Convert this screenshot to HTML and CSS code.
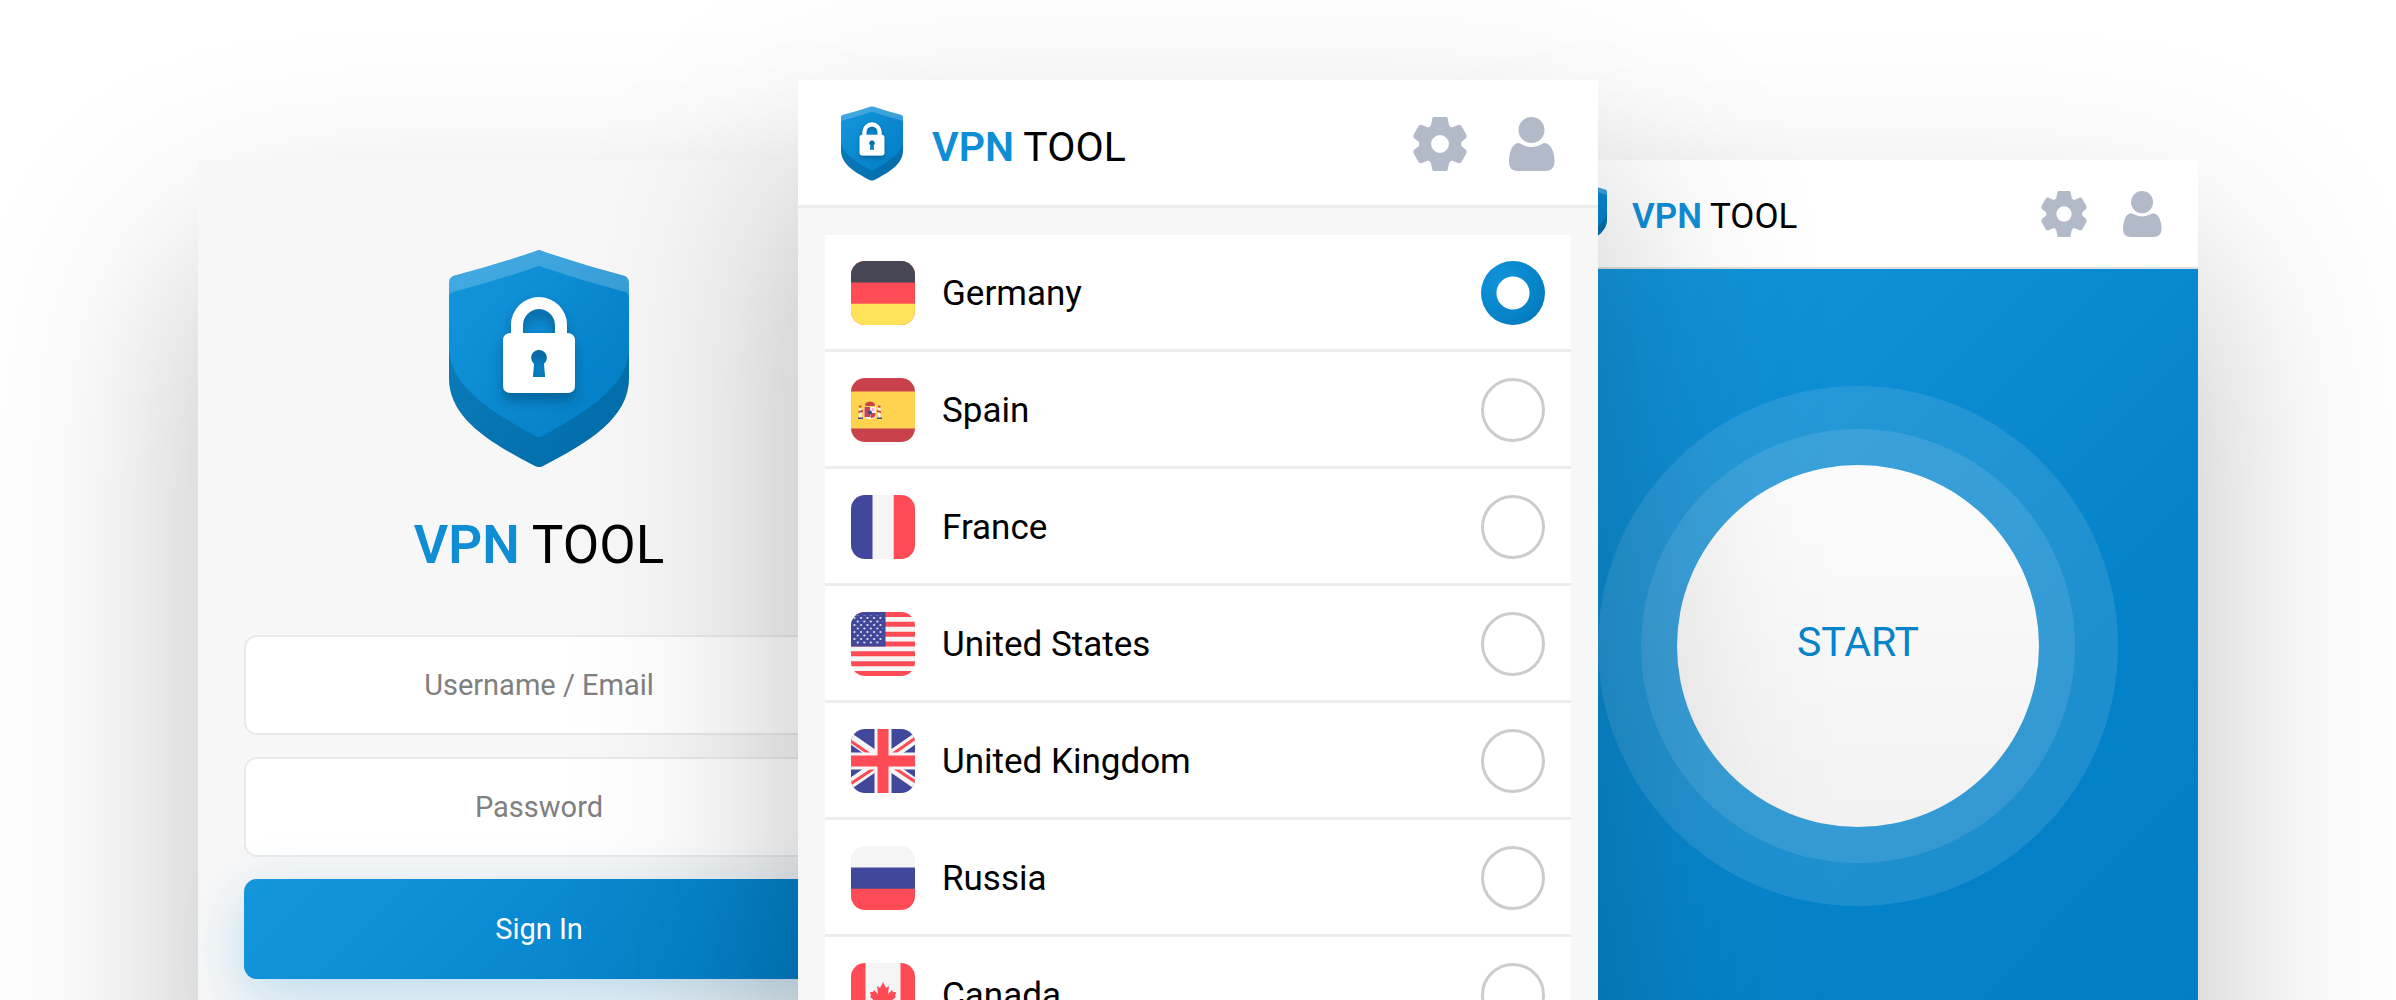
FILE: index.html
```html
<!DOCTYPE html>
<html lang="en">
<head>
  <meta charset="UTF-8" />
  <meta name="viewport" content="width=device-width, initial-scale=1.0"/>
  <title>VPN Tool</title>
  <link rel="stylesheet" href="styles.css">
</head>
<body>

  <!-- Shared icons -->
  <svg class="sprite" aria-hidden="true">
    <defs>
      <linearGradient id="shield-fill" x1="0" y1="0" x2="1" y2="1">
        <stop offset="0" stop-color="#1496dd"/>
        <stop offset="1" stop-color="#007cc3"/>
      </linearGradient>
      <filter id="lock-shadow" x="-50%" y="-50%" width="200%" height="200%">
        <feDropShadow dx="0" dy="8" stdDeviation="6" flood-color="#00324f" flood-opacity="0.4"/>
      </filter>
      <clipPath id="shield-clip">
        <path d="M87 1Q90 -1 93 1Q134 15 176 26Q180 28 180 33V128C180 168 140 192 94 216Q90 218 86 216C40 192 0 168 0 128V33Q0 28 4 26Q46 15 87 1Z"/>
      </clipPath>
      <clipPath id="flag-clip"><rect width="64" height="64" rx="14"/></clipPath>
    </defs>
    <symbol id="shield" viewBox="0 0 180 217">
      <g clip-path="url(#shield-clip)">
        <rect width="180" height="217" fill="url(#shield-fill)"/>
        <path d="M0 0H180V48Q180 43 176 42Q134 31 93 17Q90 15 87 17Q46 31 4 42Q0 43 0 48Z" fill="#fff" opacity="0.2"/>
        <path d="M0 100C2 138 44 162 86 186Q90 188 94 186C136 162 178 138 180 100V217H0Z" fill="#003a5c" opacity="0.25"/>
      </g>
      <path filter="url(#lock-shadow)" fill="#fff" fill-rule="evenodd" d="M62 83V75A28 28 0 0 1 118 75V83Q126 83 126 91V135Q126 143 118 143H62Q54 143 54 135V91Q54 83 62 83ZM74 83H106V75A16 16 0 0 0 74 75ZM84 127H96V125L95 114A8 8 0 1 0 85 114L84 125Z"/>
    </symbol>
    <symbol id="gear" viewBox="0 0 54 54">
      <path fill-rule="evenodd" d="M21 0H33Q35 0 35 3L36 8Q37 10 39 10.500L45 8Q47 7 48.500 9L53.500 18Q54 20 53 21L48.500 25Q48 27 48.500 29L53 33Q54 34 53.500 36L48.500 45Q47 47 45 46L39 43.500Q37 44 36 46L35 51Q35 54 33 54H21Q19 54 19 51L18 46Q17 44 15 43.500L9 46Q7 47 5.500 45L0.500 36Q0 34 1 33L6 29Q6.500 27 6 25L1 21Q0 20 0.500 18L5.500 9Q7 7 9 8L15 10.500Q17 10 18 8L19 3Q19 0 21 0ZM27 18A9 9 0 1 0 27 36A9 9 0 1 0 27 18Z"/>
    </symbol>
    <symbol id="user" viewBox="0 0 46 54">
      <circle cx="22.500" cy="13" r="13"/>
      <path d="M9 26Q11 26 14 28Q22.500 32 31 28Q34 26 36 26C43 27 46 38 45.500 45Q45 54 36 54H9Q0 54 0 45C0 38 2 27 9 26Z"/>
    </symbol>
  </svg>

  <main class="showcase">

    <!-- Login -->
    <section class="panel login">
      <svg class="login-shield"><use href="#shield"/></svg>
      <h1 class="brand brand-large"><b>VPN</b> TOOL</h1>
      <form class="login-form">
        <input type="text" placeholder="Username / Email" aria-label="Username or email" />
        <input type="password" placeholder="Password" aria-label="Password" />
        <button type="button">Sign In</button>
      </form>
    </section>

    <!-- Country list -->
    <section class="panel locations">
      <header class="bar">
        <svg class="bar-shield"><use href="#shield"/></svg>
        <h2 class="brand"><b>VPN</b> TOOL</h2>
        <button class="icon-button" type="button" aria-label="Settings"><svg class="icon-gear"><use href="#gear"/></svg></button>
        <button class="icon-button" type="button" aria-label="Account"><svg class="icon-user"><use href="#user"/></svg></button>
      </header>

      <div class="country-list">
        <label class="country">
          <svg class="flag" viewBox="0 0 64 64"><g clip-path="url(#flag-clip)">
            <rect width="64" height="64" fill="#ff4b55"/>
            <rect width="64" height="21.500" fill="#464655"/>
            <rect y="42.700" width="64" height="22" fill="#ffe15a"/>
          </g></svg>
          <span>Germany</span>
          <input type="radio" name="country" checked />
        </label>

        <label class="country">
          <svg class="flag" viewBox="0 0 64 64"><g clip-path="url(#flag-clip)">
            <rect width="64" height="64" fill="#c8414b"/>
            <rect y="13.500" width="64" height="37" fill="#ffd250"/>
            <path d="M8 30H10.500V40H8ZM27 30H29.500V40H27Z" fill="#f5f5f5"/>
            <path d="M7 39.500H12V41H7ZM26 39.500H31V41H26Z" fill="#41479b"/>
            <path d="M8 27.500H10.500V29.500H8ZM27 27.500H29.500V29.500H27ZM7.500 33L12 32V34L7.500 35ZM30 33L26 32V34L30 35ZM14 27Q14 24 19 23.500Q24 24 24 27L23 28H15Z" fill="#c8414b"/>
            <path d="M13 29H25V37Q25 41 19 41Q13 41 13 37Z" fill="#f5f5f5"/>
            <path d="M13.500 29H19V39H13.500ZM19.500 35H24.500V37Q24 40 19.500 40Z" fill="#c8414b"/>
            <circle cx="19" cy="34.500" r="2" fill="#41479b"/>
            <circle cx="22" cy="31.500" r="1.500" fill="#ffa0d2"/>
          </g></svg>
          <span>Spain</span>
          <input type="radio" name="country" />
        </label>

        <label class="country">
          <svg class="flag" viewBox="0 0 64 64"><g clip-path="url(#flag-clip)">
            <rect width="64" height="64" fill="#f5f5f5"/>
            <rect width="21.500" height="64" fill="#41479b"/>
            <rect x="42.700" width="22" height="64" fill="#ff4b55"/>
          </g></svg>
          <span>France</span>
          <input type="radio" name="country" />
        </label>

        <label class="country">
          <svg class="flag" viewBox="0 0 64 64">
            <defs>
              <pattern id="stars" x="1.500" y="1" width="6.500" height="7" patternUnits="userSpaceOnUse">
                <circle cx="2" cy="5" r="1" fill="#f5f5f5"/>
                <circle cx="5.300" cy="1.500" r="1" fill="#f5f5f5"/>
              </pattern>
            </defs>
            <g clip-path="url(#flag-clip)">
              <rect width="64" height="64" fill="#f5f5f5"/>
              <path d="M0 2.500H64M0 12.300H64M0 22.200H64M0 32H64M0 41.800H64M0 51.700H64M0 61.500H64" stroke="#ff4b55" stroke-width="4.900"/>
              <rect width="34.500" height="34.500" fill="#41479b"/>
              <rect x="2" y="3" width="30" height="30" fill="url(#stars)"/>
            </g>
          </svg>
          <span>United States</span>
          <input type="radio" name="country" />
        </label>

        <label class="country">
          <svg class="flag" viewBox="0 0 64 64"><g clip-path="url(#flag-clip)">
            <rect width="64" height="64" fill="#41479b"/>
            <path d="M-4 7L68 57M68 7L-4 57" stroke="#f5f5f5" stroke-width="10"/>
            <path d="M-2 11L20 26M-2 56L28 36M66 8L36 29M66 54L42 38" stroke="#ff4b55" stroke-width="3"/>
            <path d="M32 0V64M0 32H64" stroke="#f5f5f5" stroke-width="17"/>
            <path d="M32 0V64M0 32H64" stroke="#ff4b55" stroke-width="11"/>
          </g></svg>
          <span>United Kingdom</span>
          <input type="radio" name="country" />
        </label>

        <label class="country">
          <svg class="flag" viewBox="0 0 64 64"><g clip-path="url(#flag-clip)">
            <rect width="64" height="64" fill="#f5f5f5"/>
            <rect y="21.500" width="64" height="22" fill="#41479b"/>
            <rect y="42.700" width="64" height="22" fill="#ff4b55"/>
          </g></svg>
          <span>Russia</span>
          <input type="radio" name="country" />
        </label>

        <label class="country">
          <svg class="flag" viewBox="0 0 64 64"><g clip-path="url(#flag-clip)">
            <rect width="64" height="64" fill="#f5f5f5"/>
            <path d="M0 0H14.500V64H0ZM49.500 0H64V64H49.500Z" fill="#ff4b55"/>
            <path d="M32 19L35 25L38 23L37 31L41 27L42 29L45 29L44 33L45 34L38 40L39 42L33 41V47H31V41L25 42L26 40L19 34L20 33L19 29L22 29L23 27L27 31L26 23L29 25Z" fill="#ff4b55"/>
          </g></svg>
          <span>Canada</span>
          <input type="radio" name="country" />
        </label>
      </div>
    </section>

    <!-- Connect -->
    <section class="panel connect">
      <header class="bar bar-small">
        <svg class="bar-shield"><use href="#shield"/></svg>
        <h2 class="brand"><b>VPN</b> TOOL</h2>
        <button class="icon-button" type="button" aria-label="Settings"><svg class="icon-gear"><use href="#gear"/></svg></button>
        <button class="icon-button" type="button" aria-label="Account"><svg class="icon-user"><use href="#user"/></svg></button>
      </header>
      <div class="connect-body">
        <div class="ring">
          <div class="ring">
            <button class="start" type="button">START</button>
          </div>
        </div>
      </div>
    </section>

  </main>

</body>
</html>
```
FILE: styles.css
```css
* {
  box-sizing: border-box;
}

body {
  margin: 0;
  font-family: Roboto, 'Liberation Sans', sans-serif;
  background-color: #fff;
  color: #000;
}

button,
input {
  font-family: inherit;
}

.sprite {
  position: absolute;
  width: 0;
  height: 0;
}

.showcase {
  display: grid;
  grid-template-columns: minmax(0, 3fr) minmax(0, 4fr) minmax(0, 3fr);
  height: 100vh;
  padding: 80px 198px 0;
  overflow: hidden;
}

.panel {
  min-height: 1070px;
  box-shadow: 0 100px 200px rgba(0, 0, 0, 0.25);
}

/* Brand */
.brand {
  margin: 0;
  font-size: 41px;
  font-weight: 400;
  line-height: 48px;
  white-space: nowrap;
}

.brand b {
  font-weight: 600;
  color: #0f8ed6;
}

.brand-large {
  font-size: 53px;
  line-height: 64px;
}

/* Login */
.login {
  display: flex;
  flex-direction: column;
  align-items: center;
  margin: 80px -80px 0 0;
  padding: 90px 44px 0 46px;
  background-color: #f7f7f7;
}

.login-shield {
  width: 180px;
  height: 217px;
  margin-bottom: 46px;
}

.login-form {
  display: flex;
  flex-direction: column;
  align-self: stretch;
  gap: 22px;
  margin-top: 58px;
}

.login-form input,
.login-form button {
  width: 100%;
  height: 100px;
  padding: 0 24px;
  border: 2px solid #eaeaea;
  border-radius: 13px;
  font-size: 29px;
  text-align: center;
  background-color: #fff;
}

.login-form input::placeholder {
  color: #808080;
  opacity: 1;
}

.login-form button {
  border: 0;
  color: #fff;
  background: linear-gradient(135deg, #1496dd, #007cc3);
  box-shadow: 0 20px 60px rgba(20, 140, 210, 0.25);
}

/* Top bar */
.bar {
  display: flex;
  align-items: center;
  height: 128px;
  padding: 2px 43px 0;
  border-bottom: 3px solid #ececec;
  background-color: #fff;
}

.bar-shield {
  width: 62px;
  height: 75px;
  margin-right: 29px;
}

.bar .brand {
  flex: 1;
  padding-top: 6px;
}

.icon-button {
  display: flex;
  margin-left: 42px;
  padding: 0;
  border: 0;
  background: none;
}

.icon-button svg {
  height: 54px;
  fill: #b2b9c8;
}

.icon-gear {
  width: 54px;
}

.icon-user {
  width: 46px;
}

.bar-small {
  height: 109px;
  padding: 0 36px;
  border-bottom: 2px solid #dedede;
}

.bar-small .bar-shield {
  width: 53px;
  height: 64px;
  margin-right: 25px;
}

.bar-small .brand {
  font-size: 35px;
}

.bar-small .icon-button {
  margin-left: 36px;
}

.bar-small .icon-button svg {
  height: 46px;
}

.bar-small .icon-gear {
  width: 46px;
}

.bar-small .icon-user {
  width: 39px;
}

/* Country list */
.locations {
  z-index: 1;
  background-color: #f7f7f7;
}

.country-list {
  margin: 27px 27px 0;
  background-color: #fff;
}

.country {
  display: flex;
  align-items: center;
  gap: 27px;
  padding: 26px 26px 24px;
  border-bottom: 3px solid #ececec;
  font-size: 35px;
}

.country span {
  flex: 1;
}

.flag {
  width: 64px;
  height: 64px;
}

.country input {
  appearance: none;
  width: 64px;
  height: 64px;
  margin: 0;
  border: 3px solid #ccc;
  border-radius: 50%;
}

.country input:checked {
  border: 0;
  background: radial-gradient(circle, #fff 16px, transparent 17px), radial-gradient(circle at 30% 30%, #1093da, #0683c9 60%, #006fae);
}

/* Connect */
.connect {
  display: flex;
  flex-direction: column;
  margin: 80px 0 0 -80px;
  background-color: #fff;
}

.connect-body {
  flex: 1;
  display: flex;
  justify-content: center;
  align-items: flex-start;
  padding-top: 117px;
  background: linear-gradient(135deg, #1496dd, #0482c9 60%, #007cc3);
}

.ring {
  padding: 43px;
  border-radius: 50%;
  background-color: rgba(255, 255, 255, 0.1);
}

.ring .ring {
  padding: 36px;
}

.start {
  width: 362px;
  height: 362px;
  padding: 0 0 8px;
  border: 0;
  border-radius: 50%;
  font-size: 41px;
  color: #0683c9;
  background: linear-gradient(#fcfcfc, #f2f2f2);
}
```
